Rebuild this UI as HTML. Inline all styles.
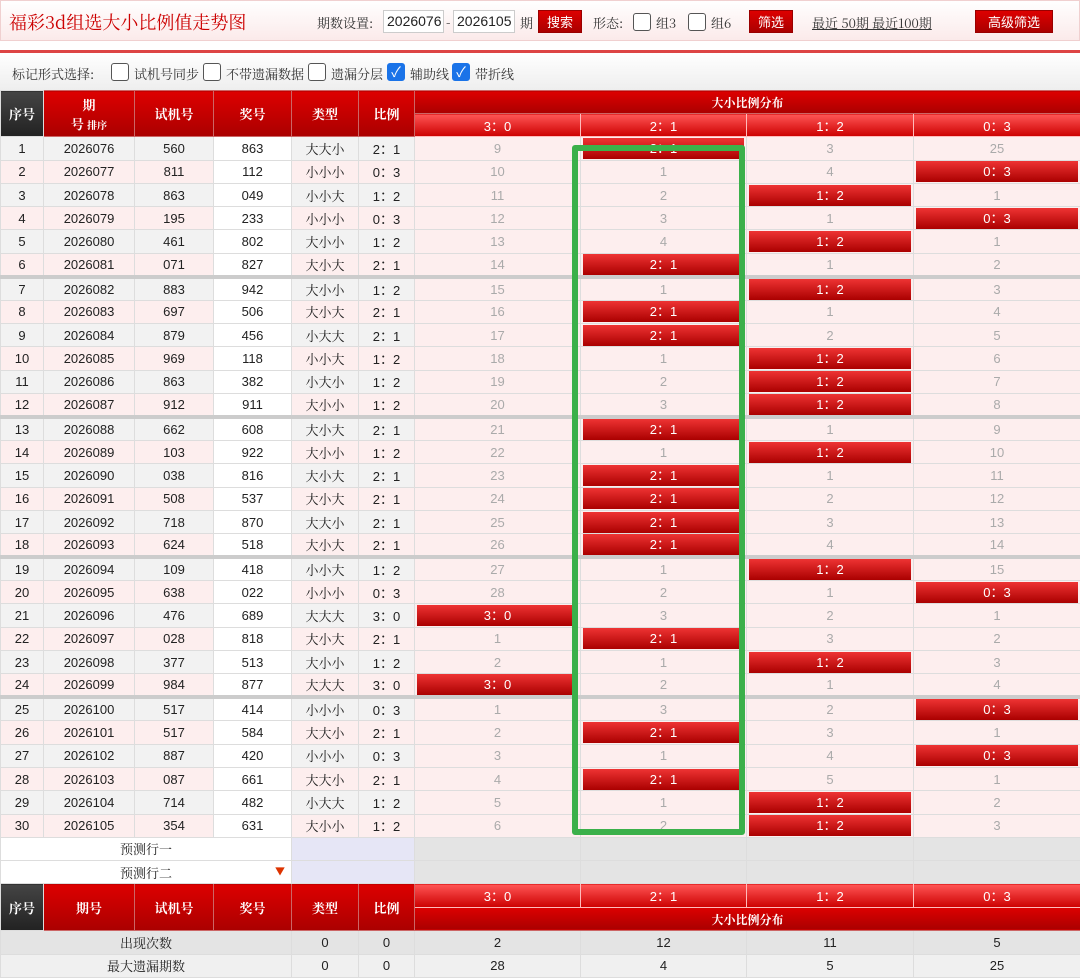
<!DOCTYPE html>
<html><head><meta charset="utf-8">
<style>
*{margin:0;padding:0;box-sizing:border-box}
body{width:1080px;height:966px;overflow:hidden;background:#fff;font-family:"Liberation Sans","Noto Sans CJK SC",sans-serif;position:relative}
.top{position:absolute;left:0;top:0;width:1080px;height:41px;background:linear-gradient(#fff,#fbeaea);border:1px solid #f0d0d0}
.title{position:absolute;left:8px;top:8px;font-size:18px;color:#c00;font-family:"Noto Serif CJK SC",serif}
.t{position:absolute;font-size:13px;color:#333;font-family:"Noto Serif CJK SC",serif}
.inp{position:absolute;top:9px;height:23px;border:1px solid #ccc;background:#fff;font-size:14px;line-height:21px;padding-left:3px;color:#222}
.btn{position:absolute;top:9px;height:23px;background:linear-gradient(#d00,#a00);color:#fff;font-size:13px;line-height:23px;text-align:center;border:1px solid #900}
.cb{position:absolute;width:18px;height:18px;border:1px solid #555;border-radius:3px;background:#fff}
.cbc{background:#1a73e8;border-color:#1a73e8;color:#fff;font-size:14px;line-height:16px;text-align:center}
.redline{position:absolute;left:0;top:50px;width:1080px;height:3px;background:#d44}
.tool{position:absolute;left:0;top:53px;width:1080px;height:37px;background:linear-gradient(#fff,#eee)}
table{position:absolute;left:0;top:90px;border-collapse:collapse;table-layout:fixed;width:1080px}
td{height:23.3px;border:1px solid #ddd;text-align:center;font-size:13px;color:#222;padding:0;white-space:nowrap;overflow:hidden}
.h{background:linear-gradient(#d00,#a00);color:#fff;font-weight:bold;font-family:"Noto Serif CJK SC",serif;border-color:#c66}
.hk{background:linear-gradient(#444,#222);color:#fff;font-weight:bold;font-family:"Noto Serif CJK SC",serif}
.hs{background:linear-gradient(#f55,#c00);color:#fff;font-size:13px;border-color:#fbb}
tr.o td{background:#f2f2f2}tr.e td{background:#fdeeee}
tr td.w{background:#fff}
tr td.d{background:#fdeeee;color:#aaa}
tr.g td{border-top:4px solid #ccc}
td.x{padding:0 2px}
td.x span{display:block;height:21px;line-height:21px;background:linear-gradient(#e33,#a00);color:#fff}
.s{font-family:"Noto Serif CJK SC",serif}
.green{position:absolute;left:572px;top:145px;width:173px;height:690px;border:6px solid #3bb04a;border-radius:3px}
</style></head><body>
<div class="top">
<div class="title">福彩3d组选大小比例值走势图</div>
<div class="t" style="left:316px;top:12px">期数设置:</div>
<div class="inp" style="left:382px;width:61px">2026076</div>
<div class="t" style="left:445px;top:11px">-</div>
<div class="inp" style="left:452px;width:62px">2026105</div>
<div class="t" style="left:519px;top:12px">期</div>
<div class="btn" style="left:537px;width:44px">搜索</div>
<div class="t" style="left:592px;top:12px">形态:</div>
<div class="cb" style="left:632px;top:12px"></div>
<div class="t" style="left:655px;top:12px">组3</div>
<div class="cb" style="left:687px;top:12px"></div>
<div class="t" style="left:710px;top:12px">组6</div>
<div class="btn" style="left:748px;width:44px">筛选</div>
<div class="t" style="left:811px;top:12px;text-decoration:underline">最近 50期 最近100期</div>
<div class="btn" style="left:974px;width:78px">高级筛选</div>
</div>
<div class="redline"></div>
<div class="tool">
<div class="t" style="left:12px;top:11px">标记形式选择:</div>
<div class="cb" style="left:111px;top:10px"></div><div class="t" style="left:134px;top:11px">试机号同步</div>
<div class="cb" style="left:203px;top:10px"></div><div class="t" style="left:226px;top:11px">不带遗漏数据</div>
<div class="cb" style="left:308px;top:10px"></div><div class="t" style="left:331px;top:11px">遗漏分层</div>
<div class="cb cbc" style="left:387px;top:10px">✓</div><div class="t" style="left:410px;top:11px">辅助线</div>
<div class="cb cbc" style="left:452px;top:10px">✓</div><div class="t" style="left:475px;top:11px">带折线</div>
</div>
<table>
<colgroup><col style="width:43px"><col style="width:91px"><col style="width:79px"><col style="width:78px"><col style="width:67px"><col style="width:56px"><col style="width:166px"><col style="width:166px"><col style="width:167px"><col style="width:167px"></colgroup>
<tr><td class="hk" rowspan="2" style="height:46px">序号</td><td class="h" rowspan="2">期<br>号 <span style="font-size:10px">排序</span></td><td class="h" rowspan="2">试机号</td><td class="h" rowspan="2">奖号</td><td class="h" rowspan="2">类型</td><td class="h" rowspan="2">比例</td><td class="h" colspan="4" style="font-size:12px;height:23px">大小比例分布</td></tr>
<tr><td class="hs" style="height:23px">3：0</td><td class="hs">2：1</td><td class="hs">1：2</td><td class="hs">0：3</td></tr>
<tr class="o"><td>1</td><td>2026076</td><td>560</td><td class="w">863</td><td class="s">大大小</td><td>2：1</td><td class="d">9</td><td class="d x"><span>2：1</span></td><td class="d">3</td><td class="d">25</td></tr>
<tr class="e"><td>2</td><td>2026077</td><td>811</td><td class="w">112</td><td class="s">小小小</td><td>0：3</td><td class="d">10</td><td class="d">1</td><td class="d">4</td><td class="d x"><span>0：3</span></td></tr>
<tr class="o"><td>3</td><td>2026078</td><td>863</td><td class="w">049</td><td class="s">小小大</td><td>1：2</td><td class="d">11</td><td class="d">2</td><td class="d x"><span>1：2</span></td><td class="d">1</td></tr>
<tr class="e"><td>4</td><td>2026079</td><td>195</td><td class="w">233</td><td class="s">小小小</td><td>0：3</td><td class="d">12</td><td class="d">3</td><td class="d">1</td><td class="d x"><span>0：3</span></td></tr>
<tr class="o"><td>5</td><td>2026080</td><td>461</td><td class="w">802</td><td class="s">大小小</td><td>1：2</td><td class="d">13</td><td class="d">4</td><td class="d x"><span>1：2</span></td><td class="d">1</td></tr>
<tr class="e"><td>6</td><td>2026081</td><td>071</td><td class="w">827</td><td class="s">大小大</td><td>2：1</td><td class="d">14</td><td class="d x"><span>2：1</span></td><td class="d">1</td><td class="d">2</td></tr>
<tr class="o g"><td>7</td><td>2026082</td><td>883</td><td class="w">942</td><td class="s">大小小</td><td>1：2</td><td class="d">15</td><td class="d">1</td><td class="d x"><span>1：2</span></td><td class="d">3</td></tr>
<tr class="e"><td>8</td><td>2026083</td><td>697</td><td class="w">506</td><td class="s">大小大</td><td>2：1</td><td class="d">16</td><td class="d x"><span>2：1</span></td><td class="d">1</td><td class="d">4</td></tr>
<tr class="o"><td>9</td><td>2026084</td><td>879</td><td class="w">456</td><td class="s">小大大</td><td>2：1</td><td class="d">17</td><td class="d x"><span>2：1</span></td><td class="d">2</td><td class="d">5</td></tr>
<tr class="e"><td>10</td><td>2026085</td><td>969</td><td class="w">118</td><td class="s">小小大</td><td>1：2</td><td class="d">18</td><td class="d">1</td><td class="d x"><span>1：2</span></td><td class="d">6</td></tr>
<tr class="o"><td>11</td><td>2026086</td><td>863</td><td class="w">382</td><td class="s">小大小</td><td>1：2</td><td class="d">19</td><td class="d">2</td><td class="d x"><span>1：2</span></td><td class="d">7</td></tr>
<tr class="e"><td>12</td><td>2026087</td><td>912</td><td class="w">911</td><td class="s">大小小</td><td>1：2</td><td class="d">20</td><td class="d">3</td><td class="d x"><span>1：2</span></td><td class="d">8</td></tr>
<tr class="o g"><td>13</td><td>2026088</td><td>662</td><td class="w">608</td><td class="s">大小大</td><td>2：1</td><td class="d">21</td><td class="d x"><span>2：1</span></td><td class="d">1</td><td class="d">9</td></tr>
<tr class="e"><td>14</td><td>2026089</td><td>103</td><td class="w">922</td><td class="s">大小小</td><td>1：2</td><td class="d">22</td><td class="d">1</td><td class="d x"><span>1：2</span></td><td class="d">10</td></tr>
<tr class="o"><td>15</td><td>2026090</td><td>038</td><td class="w">816</td><td class="s">大小大</td><td>2：1</td><td class="d">23</td><td class="d x"><span>2：1</span></td><td class="d">1</td><td class="d">11</td></tr>
<tr class="e"><td>16</td><td>2026091</td><td>508</td><td class="w">537</td><td class="s">大小大</td><td>2：1</td><td class="d">24</td><td class="d x"><span>2：1</span></td><td class="d">2</td><td class="d">12</td></tr>
<tr class="o"><td>17</td><td>2026092</td><td>718</td><td class="w">870</td><td class="s">大大小</td><td>2：1</td><td class="d">25</td><td class="d x"><span>2：1</span></td><td class="d">3</td><td class="d">13</td></tr>
<tr class="e"><td>18</td><td>2026093</td><td>624</td><td class="w">518</td><td class="s">大小大</td><td>2：1</td><td class="d">26</td><td class="d x"><span>2：1</span></td><td class="d">4</td><td class="d">14</td></tr>
<tr class="o g"><td>19</td><td>2026094</td><td>109</td><td class="w">418</td><td class="s">小小大</td><td>1：2</td><td class="d">27</td><td class="d">1</td><td class="d x"><span>1：2</span></td><td class="d">15</td></tr>
<tr class="e"><td>20</td><td>2026095</td><td>638</td><td class="w">022</td><td class="s">小小小</td><td>0：3</td><td class="d">28</td><td class="d">2</td><td class="d">1</td><td class="d x"><span>0：3</span></td></tr>
<tr class="o"><td>21</td><td>2026096</td><td>476</td><td class="w">689</td><td class="s">大大大</td><td>3：0</td><td class="d x"><span>3：0</span></td><td class="d">3</td><td class="d">2</td><td class="d">1</td></tr>
<tr class="e"><td>22</td><td>2026097</td><td>028</td><td class="w">818</td><td class="s">大小大</td><td>2：1</td><td class="d">1</td><td class="d x"><span>2：1</span></td><td class="d">3</td><td class="d">2</td></tr>
<tr class="o"><td>23</td><td>2026098</td><td>377</td><td class="w">513</td><td class="s">大小小</td><td>1：2</td><td class="d">2</td><td class="d">1</td><td class="d x"><span>1：2</span></td><td class="d">3</td></tr>
<tr class="e"><td>24</td><td>2026099</td><td>984</td><td class="w">877</td><td class="s">大大大</td><td>3：0</td><td class="d x"><span>3：0</span></td><td class="d">2</td><td class="d">1</td><td class="d">4</td></tr>
<tr class="o g"><td>25</td><td>2026100</td><td>517</td><td class="w">414</td><td class="s">小小小</td><td>0：3</td><td class="d">1</td><td class="d">3</td><td class="d">2</td><td class="d x"><span>0：3</span></td></tr>
<tr class="e"><td>26</td><td>2026101</td><td>517</td><td class="w">584</td><td class="s">大大小</td><td>2：1</td><td class="d">2</td><td class="d x"><span>2：1</span></td><td class="d">3</td><td class="d">1</td></tr>
<tr class="o"><td>27</td><td>2026102</td><td>887</td><td class="w">420</td><td class="s">小小小</td><td>0：3</td><td class="d">3</td><td class="d">1</td><td class="d">4</td><td class="d x"><span>0：3</span></td></tr>
<tr class="e"><td>28</td><td>2026103</td><td>087</td><td class="w">661</td><td class="s">大大小</td><td>2：1</td><td class="d">4</td><td class="d x"><span>2：1</span></td><td class="d">5</td><td class="d">1</td></tr>
<tr class="o"><td>29</td><td>2026104</td><td>714</td><td class="w">482</td><td class="s">小大大</td><td>1：2</td><td class="d">5</td><td class="d">1</td><td class="d x"><span>1：2</span></td><td class="d">2</td></tr>
<tr class="e"><td>30</td><td>2026105</td><td>354</td><td class="w">631</td><td class="s">大小小</td><td>1：2</td><td class="d">6</td><td class="d">2</td><td class="d x"><span>1：2</span></td><td class="d">3</td></tr>
<tr><td colspan="4" class="s" style="background:#fff">预测行一</td><td colspan="2" style="background:#e6e6f6"></td><td style="background:#e4e4e4"></td><td style="background:#e4e4e4"></td><td style="background:#e4e4e4"></td><td style="background:#e4e4e4"></td></tr>
<tr><td colspan="4" class="s" style="background:#fff;position:relative">预测行二<span style="position:absolute;right:6px;color:#d30;font-size:10px">▼</span></td><td colspan="2" style="background:#e6e6f6"></td><td style="background:#e4e4e4"></td><td style="background:#e4e4e4"></td><td style="background:#e4e4e4"></td><td style="background:#e4e4e4"></td></tr>
<tr><td class="hk" rowspan="2" style="height:47px">序号</td><td class="h" rowspan="2">期号</td><td class="h" rowspan="2">试机号</td><td class="h" rowspan="2">奖号</td><td class="h" rowspan="2">类型</td><td class="h" rowspan="2">比例</td><td class="hs">3：0</td><td class="hs">2：1</td><td class="hs">1：2</td><td class="hs">0：3</td></tr>
<tr><td class="h" colspan="4" style="font-size:12px">大小比例分布</td></tr>
<tr><td colspan="4" class="s" style="background:#e4e4e4">出现次数</td><td style="background:#e4e4e4">0</td><td style="background:#e4e4e4">0</td><td style="background:#e4e4e4">2</td><td style="background:#e4e4e4">12</td><td style="background:#e4e4e4">11</td><td style="background:#e4e4e4">5</td></tr>
<tr><td colspan="4" class="s" style="background:#f0f0f0">最大遗漏期数</td><td style="background:#f0f0f0">0</td><td style="background:#f0f0f0">0</td><td style="background:#f0f0f0">28</td><td style="background:#f0f0f0">4</td><td style="background:#f0f0f0">5</td><td style="background:#f0f0f0">25</td></tr>
</table>
<div class="green"></div>
</body></html>
